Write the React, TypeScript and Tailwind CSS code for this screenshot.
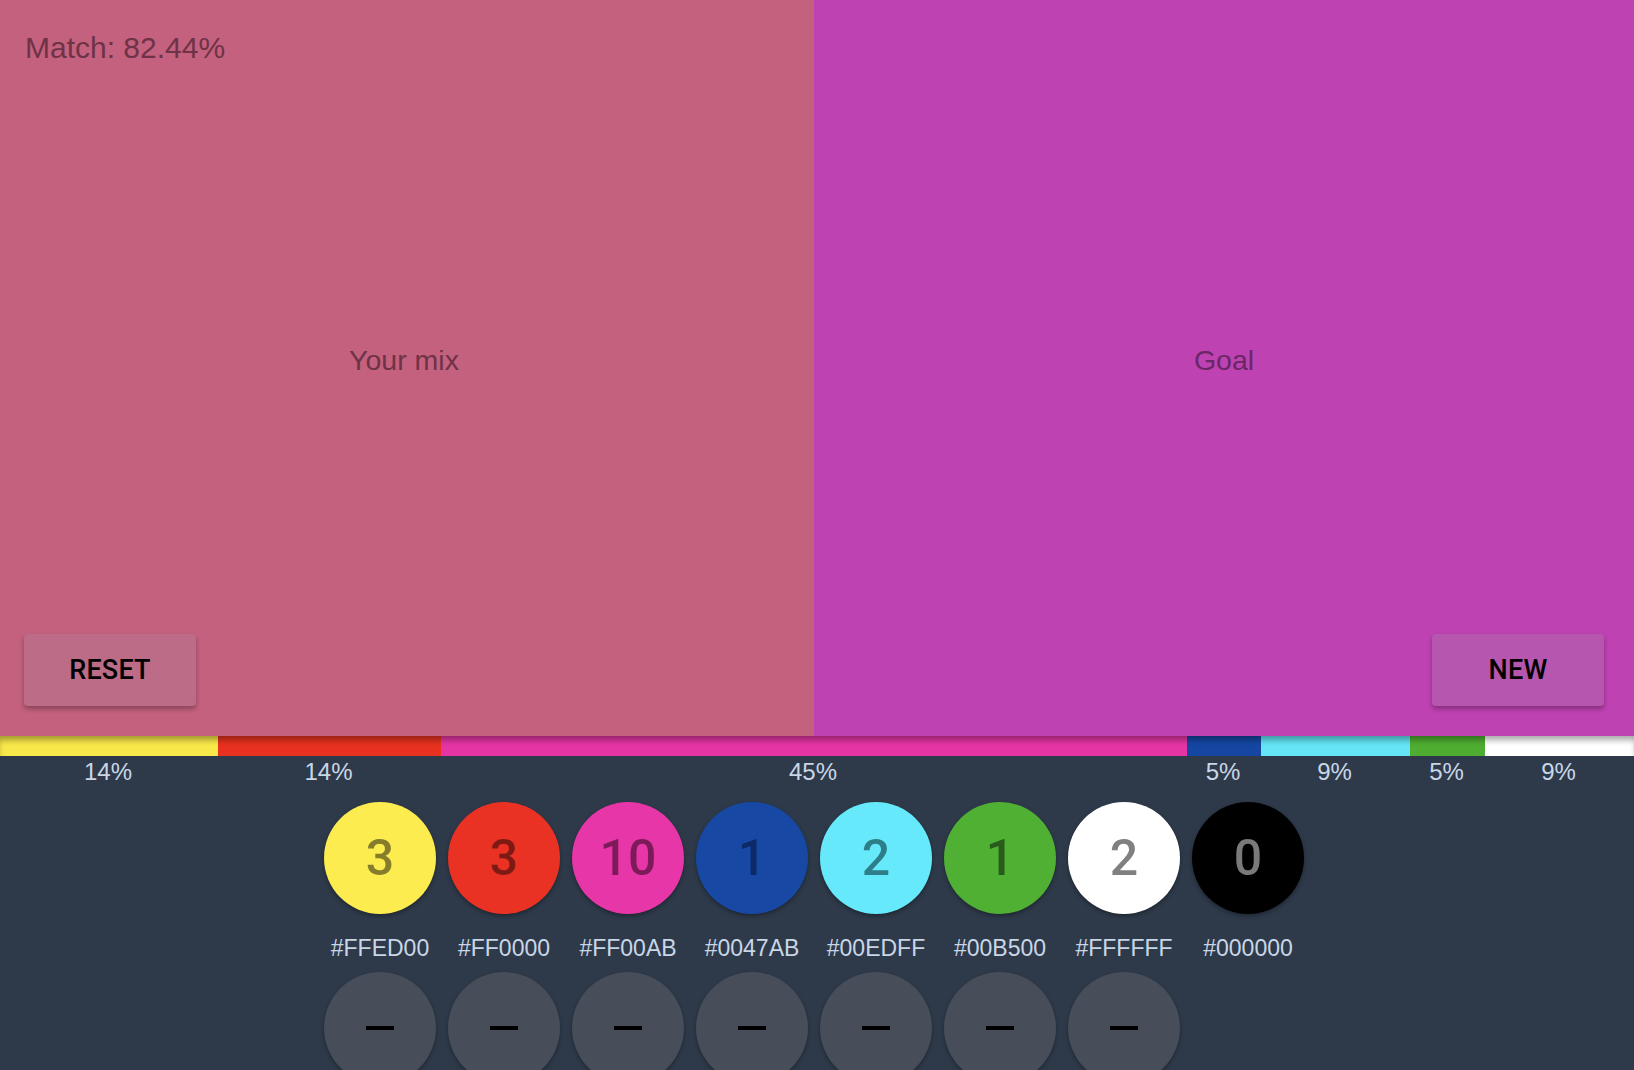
import React from "react";

const swatches = [
  { hex: "#FFED00", color: "#fdec4f", bar: "#f9e84a", text: "#857d2c", count: 3, pct: "14%", w: 218 },
  { hex: "#FF0000", color: "#e93224", bar: "#e8321f", text: "#7e1a14", count: 3, pct: "14%", w: 223 },
  { hex: "#FF00AB", color: "#e736a7", bar: "#e535a4", text: "#7c1a5a", count: 10, pct: "45%", w: 746 },
  { hex: "#0047AB", color: "#1749a4", bar: "#1547a2", text: "#0b2a66", count: 1, pct: "5%", w: 74 },
  { hex: "#00EDFF", color: "#66e9fa", bar: "#64e6f6", text: "#2d7e88", count: 2, pct: "9%", w: 149 },
  { hex: "#00B500", color: "#50b034", bar: "#4fae32", text: "#285b1c", count: 1, pct: "5%", w: 75 },
  { hex: "#FFFFFF", color: "#ffffff", bar: "#ffffff", text: "#808080", count: 2, pct: "9%", w: 149 },
  { hex: "#000000", color: "#000000", bar: "#000000", text: "#7a7a7a", count: 0, pct: "0%", w: 0 },
];

const sans = { fontFamily: '"Liberation Sans", Arial, sans-serif' };
const roboto = { fontFamily: 'Roboto, "Liberation Sans", sans-serif' };

export default function App() {
  const used = swatches.filter((s) => s.count > 0);
  return (
    <div className="w-[1634px] h-[1070px] overflow-hidden bg-[#2e3a4a] flex flex-col" style={sans}>
      <div className="flex h-[736px] shrink-0">
        <div className="relative w-[814px] bg-[#c4617e] flex items-center justify-center">
          <div className="absolute left-[25px] top-[33px] text-[30px] text-[#6e3346] leading-none">Match: 82.44%</div>
          <div className="text-[28.5px] text-[#6e3346] -mt-[16px] pr-[6px]">Your mix</div>
          <button
            className="absolute left-[24px] bottom-[30px] w-[172px] h-[72px] rounded-[4px] bg-[#bc6c87] shadow-[0_3px_5px_rgba(0,0,0,0.3)] text-black text-[27px] font-medium tracking-[0.2px]"
            style={roboto}
          >
            RESET
          </button>
        </div>
        <div className="relative flex-1 bg-[#bf42b2] flex items-center justify-center">
          <div className="text-[28.5px] text-[#6a2766] -mt-[16px]">Goal</div>
          <button
            className="absolute right-[30px] bottom-[30px] w-[172px] h-[72px] rounded-[4px] bg-[#b656af] shadow-[0_3px_5px_rgba(0,0,0,0.3)] text-black text-[27px] font-medium tracking-[0.2px]"
            style={roboto}
          >
            NEW
          </button>
        </div>
      </div>

      <div className="flex flex-col shrink-0">
        <div className="relative flex h-[20px]">
          {used.map((s) => (
            <div key={s.hex} className="shrink-0" style={{ width: s.w, backgroundColor: s.bar }} />
          ))}
          <div className="absolute inset-0 shadow-[inset_0_6px_6px_-2px_rgba(0,0,0,0.35)] pointer-events-none" />
        </div>
        <div className="flex h-[32px]">
          {used.map((s) => (
            <div
              key={s.hex}
              className="shrink-0 flex items-center justify-center pr-[2px] text-[24px] text-[#c9d6e6] leading-none"
              style={{ width: s.w }}
            >
              {s.pct}
            </div>
          ))}
        </div>
      </div>

      <div className="flex justify-center gap-[12px] pt-[14px] pr-[6px]">
        {swatches.map((s) => (
          <div key={s.hex} className="flex flex-col items-center w-[112px]">
            <div
              className="w-[112px] h-[112px] rounded-full flex items-center justify-center shadow-[0_2px_4px_rgba(0,0,0,0.35)] text-[50px] font-medium leading-none"
              style={{ backgroundColor: s.color, color: s.text, ...roboto }}
            >
              {s.count}
            </div>
            <div className="mt-[20px] h-[28px] flex items-center justify-center whitespace-nowrap text-[23px] text-[#c9d6e6] leading-none">
              {s.hex}
            </div>
            {s.count > 0 ? (
              <div className="mt-[10px] w-[112px] h-[112px] rounded-full bg-[#474e5a] shadow-[0_2px_4px_rgba(0,0,0,0.3)] flex items-center justify-center">
                <div className="w-[28px] h-[4px] bg-black" />
              </div>
            ) : (
              <div className="mt-[10px] w-[112px] h-[112px]" />
            )}
          </div>
        ))}
      </div>
    </div>
  );
}
